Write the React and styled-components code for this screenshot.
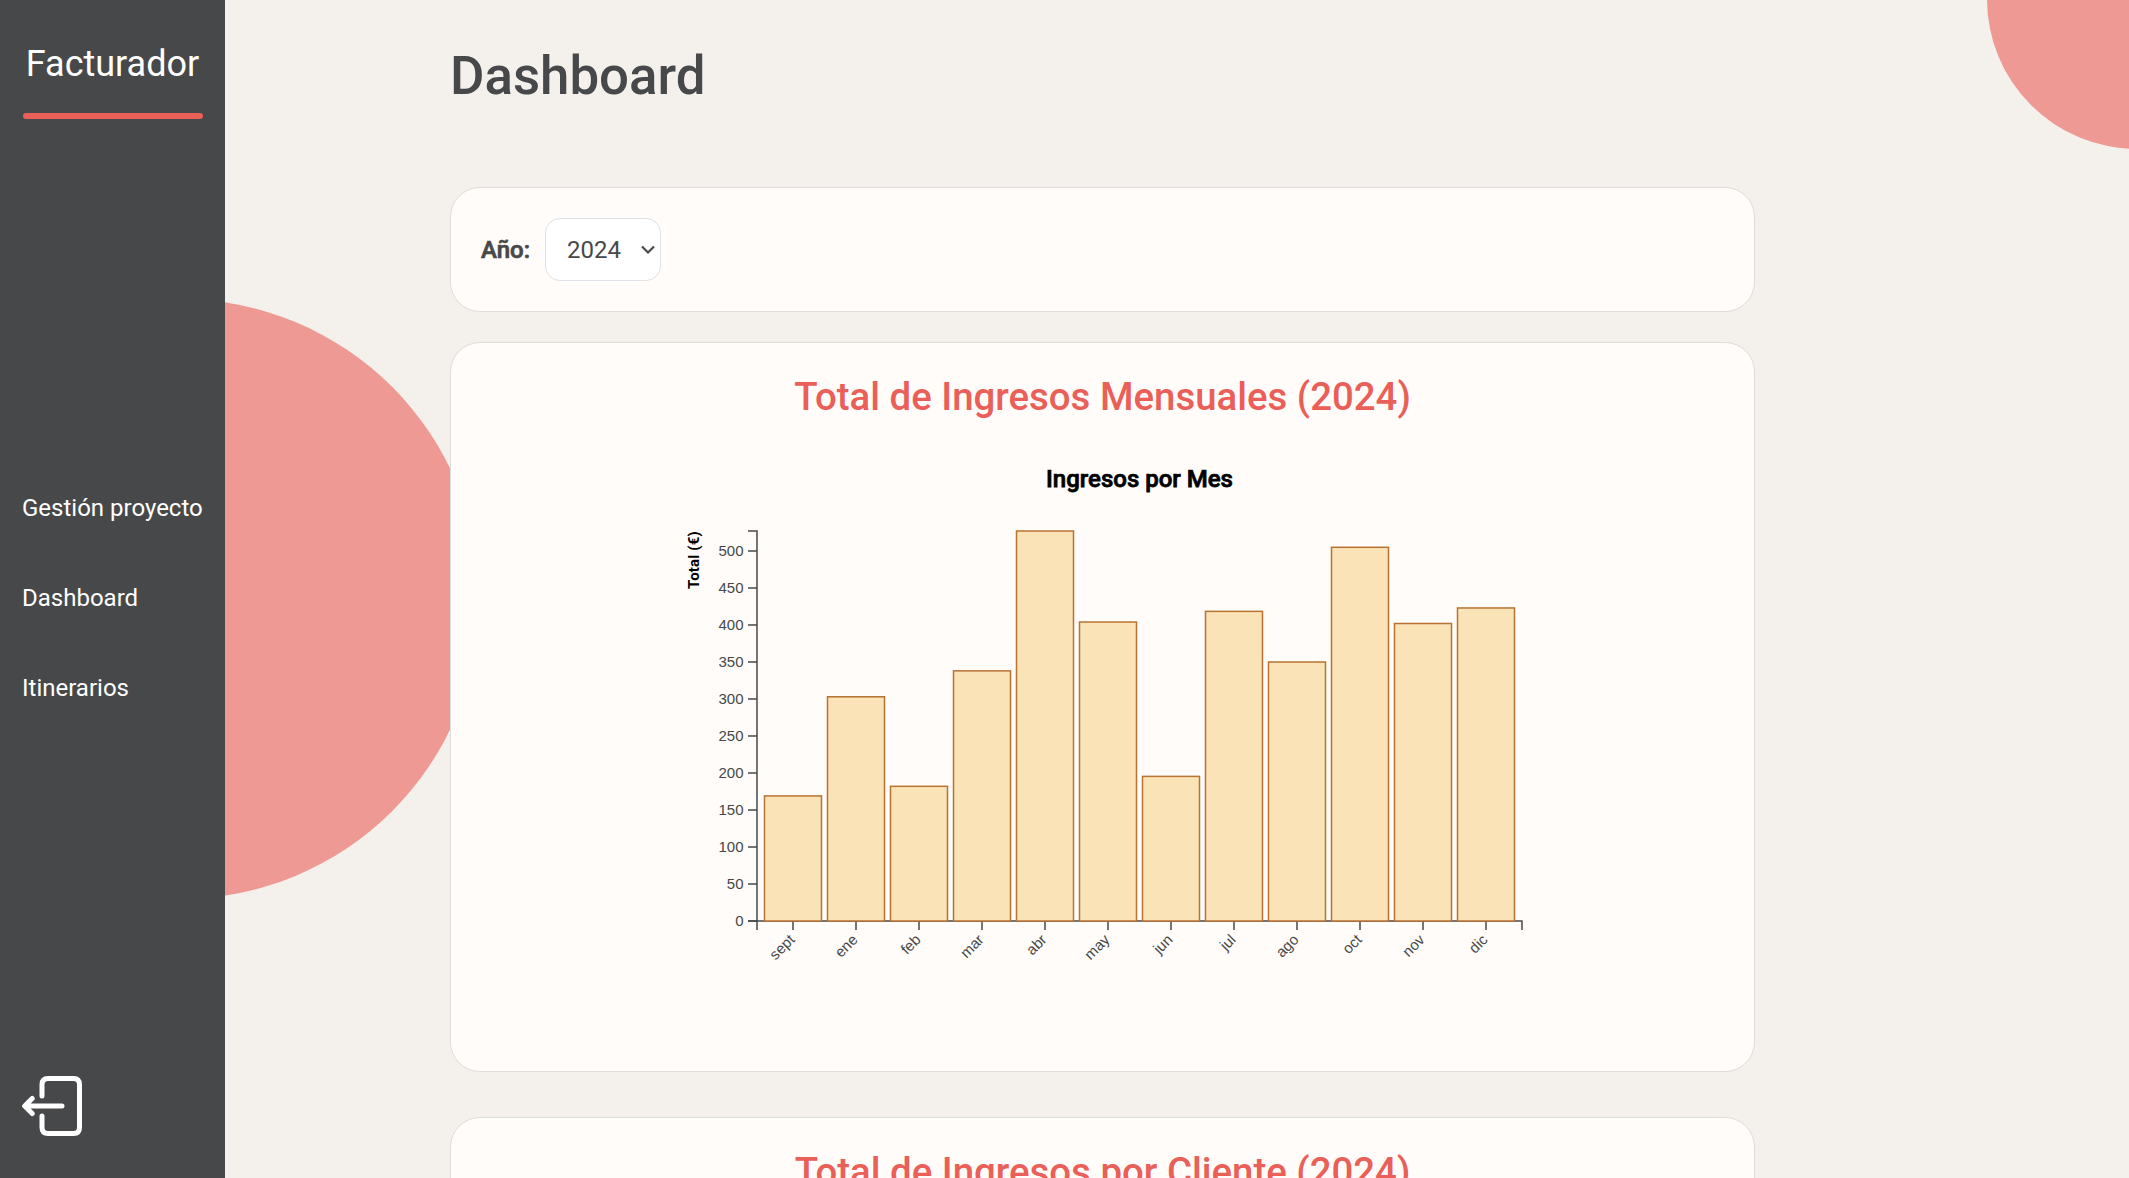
import React from "react";
import styled, { createGlobalStyle } from "styled-components";

const GlobalStyle = createGlobalStyle`
  * { box-sizing: border-box; }
  html, body { margin: 0; height: 100%; overflow: hidden; }
  body {
    background: #f4f1ec;
    color: #474849;
    font-family: Roboto, "Liberation Sans", sans-serif;
    font-size: 24px;
  }
`;

const Page = styled.div`
  position: relative;
  display: flex;
  height: 1178px;
  overflow: hidden;
`;

const Circle = styled.div`
  position: absolute;
  left: ${(p) => p.$x}px;
  top: ${(p) => p.$y}px;
  width: ${(p) => p.$size}px;
  height: ${(p) => p.$size}px;
  border-radius: 50%;
  background: #ee9993;
`;

const Sidebar = styled.aside`
  position: relative;
  display: flex;
  flex-direction: column;
  justify-content: space-between;
  flex: none;
  width: 225px;
  padding: 37px 22px 42px;
  background: #474849;
  color: #fff;
`;

const Brand = styled.div`
  display: flex;
  flex-direction: column;
  align-items: center;
  gap: 22px;
  height: 88px;
  font-size: 36px;
  line-height: 54px;
`;

const BrandRule = styled.div`
  flex: none;
  width: 180px;
  height: 6px;
  margin-left: 1px;
  border-radius: 3px;
  background: #ea5f58;
`;

const Nav = styled.nav`
  display: flex;
  flex-direction: column;
  gap: 54px;
  margin-top: -6px;
`;

const NavLink = styled.a`
  line-height: 36px;
  white-space: nowrap;
  color: #fff;
`;

const Logout = styled.svg`
  display: block;
  width: 60px;
  height: 60px;
`;

const Main = styled.main`
  position: relative;
  flex: none;
  display: flex;
  flex-direction: column;
  width: 1305px;
  margin-left: 225px;
`;

const Heading = styled.h1`
  margin: 44px 0 79px;
  font-size: 52.8px;
  font-weight: 500;
  line-height: 64px;
`;

const Card = styled.section`
  flex: none;
  display: flex;
  flex-direction: ${(p) => (p.$row ? "row" : "column")};
  align-items: center;
  gap: ${(p) => (p.$row ? "15px" : "0")};
  height: ${(p) => p.$height}px;
  margin-bottom: ${(p) => p.$gap}px;
  padding: 30px;
  border: 1px solid #dddddb;
  border-radius: 30px;
  background: #fffcf9;
`;

const Label = styled.label`
  font-weight: 500;
  -webkit-text-stroke: 0.7px #474849;
`;

const Select = styled.div`
  display: flex;
  align-items: center;
  justify-content: space-between;
  width: 116px;
  height: 63px;
  padding: 0 4px 0 21px;
  border: 1px solid #dee2e6;
  border-radius: 15px;
  background: #fff;
`;

const CardTitle = styled.h2`
  margin: 0;
  font-size: 38.4px;
  font-weight: 500;
  line-height: 48px;
  color: #ea5f58;
`;

const Chart = styled.svg`
  display: block;
  flex: none;
  width: 900px;
  height: 600px;
`;

const TickText = styled.text`
  font-family: "Liberation Sans", Arial, sans-serif;
  font-size: 10px;
  fill: #474849;
`;

const ChartTitle = styled.text`
  font-size: 16px;
  font-weight: 500;
  fill: #000;
  stroke: #000;
  stroke-width: 0.5px;
`;

const AxisTitle = styled.text`
  font-size: 10px;
  font-weight: 700;
  letter-spacing: 0.12px;
  fill: #000;
`;

const data = [
  ["sept", 169], ["ene", 303], ["feb", 182], ["mar", 338],
  ["abr", 527], ["may", 404], ["jun", 195.4], ["jul", 418.4],
  ["ago", 350], ["oct", 505], ["nov", 402], ["dic", 423],
];
const HEIGHT = 260;
const WIDTH = 510;
const yOf = (v) => HEIGHT * (1 - v / 527);
const ticks = [0, 50, 100, 150, 200, 250, 300, 350, 400, 450, 500];

function IncomeChart() {
  return (
    <Chart viewBox="0 0 600 400">
      <g transform="translate(69.333 73.333)">
        <g fill="none" stroke="#474849">
          <path d={`M0,6V0H${WIDTH}V6`} transform={`translate(0 ${HEIGHT})`} />
          <path d={`M-6,0H0V${HEIGHT}H-6`} />
          {ticks.map((t) => <line key={t} x1="-6" x2="0" y1={yOf(t)} y2={yOf(t)} />)}
          {data.map(([m], i) => (
            <line key={m} x1={24 + i * 42} x2={24 + i * 42} y1={HEIGHT} y2={HEIGHT + 6} />
          ))}
        </g>
        {ticks.map((t) => (
          <TickText key={t} x="-9" y={yOf(t)} dy="0.32em" textAnchor="end">{t}</TickText>
        ))}
        {data.map(([m], i) => (
          <TickText
            key={m}
            transform={`translate(${24 + i * 42} ${HEIGHT}) rotate(-45)`}
            x="-8" y="9" dy="0.15em"
            textAnchor="end"
          >
            {m}
          </TickText>
        ))}
        {data.map(([m, v], i) => (
          <rect
            key={m}
            x={5 + i * 42} y={yOf(v)} width="38" height={HEIGHT - yOf(v)}
            fill="#fae3b7" stroke="#b87333"
          />
        ))}
        <ChartTitle x="255" y="-29.5" textAnchor="middle">Ingresos por Mes</ChartTitle>
        <AxisTitle transform="rotate(-90)" x="0" y="-38.5" textAnchor="end">Total (€)</AxisTitle>
      </g>
    </Chart>
  );
}

export default function App() {
  return (
    <>
      <GlobalStyle />
      <Page>
        <Circle $x={-120} $y={298.7} $size={600} />
        <Circle $x={1987} $y={-151} $size={300} />
        <Sidebar>
          <Brand>
            Facturador
            <BrandRule />
          </Brand>
          <Nav>
            <NavLink>Gestión proyecto</NavLink>
            <NavLink>Dashboard</NavLink>
            <NavLink>Itinerarios</NavLink>
          </Nav>
          <Logout viewBox="0 0 60 60" fill="none" stroke="#fff" strokeWidth="5" strokeLinecap="round" strokeLinejoin="round">
            <path d="M20 20V8.500Q20 2.500 26 2.500H51.500Q57.500 2.500 57.500 8.500V51.500Q57.500 57.500 51.500 57.500H26Q20 57.500 20 51.500V40" />
            <path d="M40 30H3M10.200 22.500L2.700 30L10.200 37.500" />
          </Logout>
        </Sidebar>
        <Main>
          <Heading>Dashboard</Heading>
          <Card $row $height={125} $gap={30}>
            <Label>Año:</Label>
            <Select>
              2024
              <svg width="16" height="10" viewBox="0 0 16 10" fill="none" stroke="#474849" strokeWidth="2.200">
                <path d="M2 1.500L8 7.500L14 1.500" />
              </svg>
            </Select>
          </Card>
          <Card $height={730} $gap={45}>
            <CardTitle>Total de Ingresos Mensuales (2024)</CardTitle>
            <IncomeChart />
          </Card>
          <Card $height={730} $gap={0}>
            <CardTitle>Total de Ingresos por Cliente (2024)</CardTitle>
          </Card>
        </Main>
      </Page>
    </>
  );
}
